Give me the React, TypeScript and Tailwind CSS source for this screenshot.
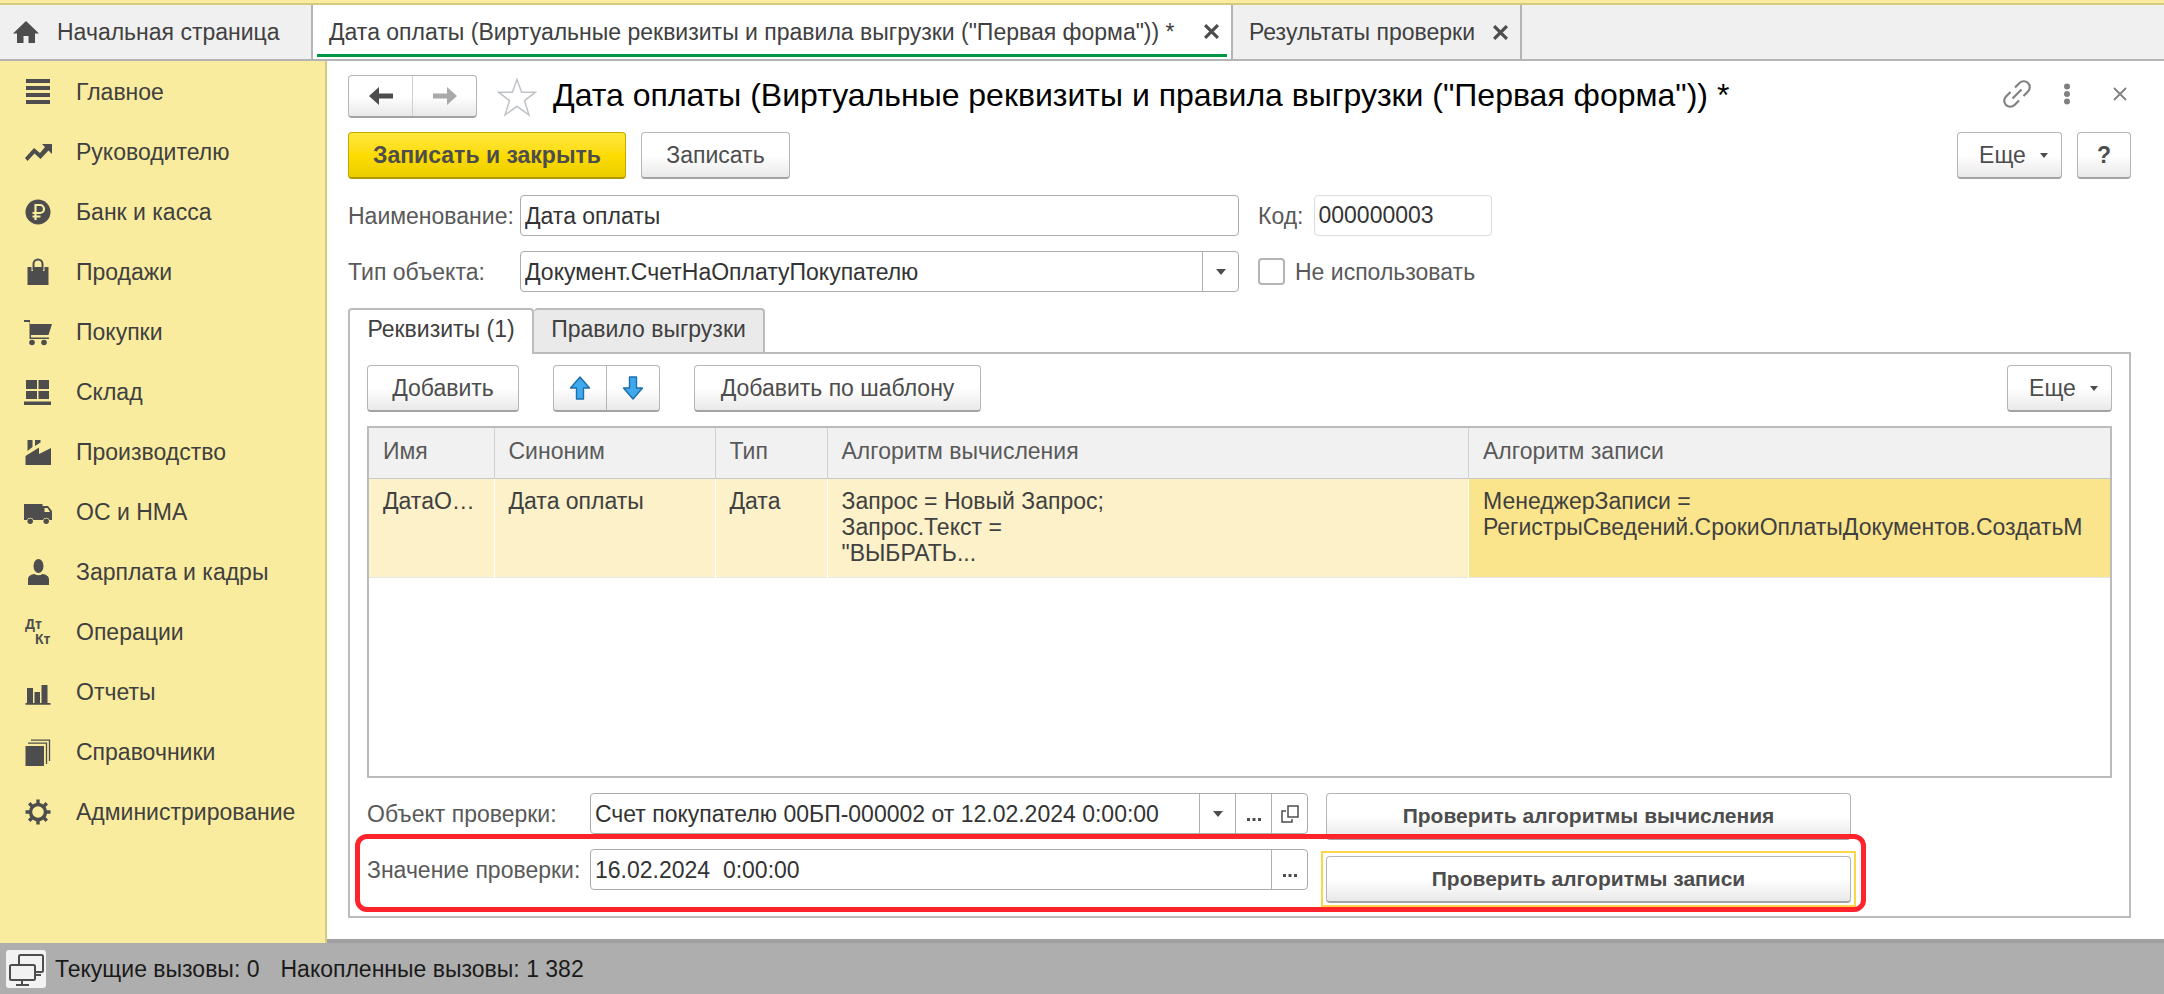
import React from "react";

type IconProps = { children: React.ReactNode };

function NavIcon({ children }: IconProps) {
  return (
    <svg viewBox="0 0 28 28" className="size-7 shrink-0 overflow-visible" fill="#4d4d4d" aria-hidden="true">
      {children}
    </svg>
  );
}

const sections: { label: string; icon: React.ReactNode }[] = [
  {
    label: "Главное",
    icon: <path d="M2 1h24v4H2zM2 8h24v4H2zM2 15h24v4H2zM2 22h24v4H2z" />,
  },
  {
    label: "Руководителю",
    icon: (
      <path d="M1 20 L10 10 L16 15 L21 9 L18 6 H28 V16 L24.500 12.500 L16.500 21 L10.500 15.500 L3.500 23 Z" />
    ),
  },
  {
    label: "Банк и касса",
    icon: (
      <>
        <circle cx="14" cy="14" r="12.500" />
        <path
          d="M11.500 22V7h4.500a4 4 0 0 1 0 8H8.500M8.500 18.500h8"
          fill="none"
          stroke="#f8ec9f"
          strokeWidth="2.200"
        />
      </>
    ),
  },
  {
    label: "Продажи",
    icon: (
      <>
        <path d="M3.500 9h4v4h1.500V9h10v4h1.500V9h4v18h-21z" />
        <path d="M9.500 12V6a4.500 4.500 0 0 1 9 0v6" fill="none" stroke="#4d4d4d" strokeWidth="2" />
      </>
    ),
  },
  {
    label: "Покупки",
    icon: (
      <>
        <path d="M0 2h6v4h22l-3.500 11H7v2.500h18V21H5.500V4H0z" />
        <circle cx="8" cy="24.500" r="2.800" />
        <circle cx="20" cy="24.500" r="2.800" />
      </>
    ),
  },
  {
    label: "Склад",
    icon: <path d="M2 2h11v9H2zM14.500 2H25v9H14.500zM2 13h11v8H2zM14.500 13H25v8H14.500zM0 23.500h27V27H0z" />,
  },
  {
    label: "Производство",
    icon: (
      <>
        <path d="M1.500 27V18L15 9.500V16L27 10v17z" />
        <path d="M3.500 2H8.500V9L3.500 13zM11 2h5.500v2.500L11 8z" />
      </>
    ),
  },
  {
    label: "ОС и НМА",
    icon: (
      <>
        <path d="M0 6h18.500v2H24l4 5v9h-2.500a3.500 3.500 0 0 0-6.500 0H9.500a3.500 3.500 0 0 0-6.500 0H0z" />
        <path d="M20.500 10h3l2.500 4h-5.500z" fill="#f8ec9f" />
        <circle cx="6.200" cy="23.200" r="2.700" />
        <circle cx="22.200" cy="23.200" r="2.700" />
      </>
    ),
  },
  {
    label: "Зарплата и кадры",
    icon: (
      <>
        <ellipse cx="14.500" cy="8" rx="5" ry="7" />
        <path d="M4 27v-5.500c0-3.500 3-5 6.500-5.500q4 2.500 8 0c3.500.5 6.500 2 6.500 5.500V27z" />
      </>
    ),
  },
  {
    label: "Операции",
    icon: (
      <g fontFamily="Liberation Sans, Arial, sans-serif" fontWeight="bold" fontSize="14">
        <text x="1" y="11">Дт</text>
        <text x="11" y="26">Кт</text>
      </g>
    ),
  },
  {
    label: "Отчеты",
    icon: <path d="M1.500 25h1.500V10h6v15h1.500V14h5.500v11h1.500V7h6v18h3v1.800h-25z" />,
  },
  {
    label: "Справочники",
    icon: (
      <>
        <path d="M1.500 8H20v20H1.500z" />
        <path d="M4 5.200h18.500V26M7 2.200h18.500V23" fill="none" stroke="#4d4d4d" strokeWidth="1.300" />
      </>
    ),
  },
  {
    label: "Администрирование",
    icon: (
      <>
        <circle cx="14" cy="14" r="7.500" fill="none" stroke="#4d4d4d" strokeWidth="3.400" />
        <path
          d="M14 1.500v5M14 21.500v5M1.500 14h5M21.500 14h5M5.200 5.200l3.500 3.500M19.300 19.300l3.500 3.500M22.800 5.200l-3.500 3.500M8.700 19.300l-3.500 3.500"
          stroke="#4d4d4d"
          strokeWidth="3.400"
        />
      </>
    ),
  },
];

const buttonBase =
  "flex items-center justify-center rounded border border-[#b5b5b5] border-b-2 border-b-[#a3a3a3] bg-linear-to-b from-white from-50% to-[#e9e9e9] text-[#4d4d4d]";

const fieldBox = "flex h-[41px] overflow-hidden rounded border border-[#ababab] bg-white";
const fieldInput = "min-w-0 flex-1 bg-transparent px-1 text-[#333] outline-none";
const fieldButton =
  "flex w-9 shrink-0 items-center justify-center border-l border-[#b0b0b0] text-[#4d4d4d]";

function Caret() {
  return (
    <svg viewBox="0 0 10 6" className="h-1.5 w-2.5" fill="#4d4d4d" aria-hidden="true">
      <path d="M0 0h10L5 6z" />
    </svg>
  );
}

function Dots() {
  return (
    <svg viewBox="0 0 16 18" className="h-[18px] w-4" fill="#4d4d4d" aria-hidden="true">
      <path d="M1 13h3v3H1zM6.500 13h3v3h-3zM12 13h3v3h-3z" />
    </svg>
  );
}

function Cross({ bold = false }: { bold?: boolean }) {
  return (
    <svg
      viewBox="0 0 14 14"
      className={bold ? "size-[15px]" : "size-3.5"}
      stroke={bold ? "#4d4d4d" : "#808080"}
      strokeWidth={bold ? 3 : 1.8}
      aria-hidden="true"
    >
      <path d="M1 1l12 12M13 1L1 13" />
    </svg>
  );
}

function MoreButton() {
  return (
    <button type="button" className={`${buttonBase} h-[47px] w-[105px] gap-3.5 pl-2`}>
      Еще
      <svg viewBox="0 0 8 5" className="h-[5px] w-2" fill="#4d4d4d" aria-hidden="true">
        <path d="M0 0h8L4 5z" />
      </svg>
    </button>
  );
}

function BlueArrow({ down = false }: { down?: boolean }) {
  return (
    <svg viewBox="0 0 22 24" className="h-6 w-[22px]" aria-hidden="true">
      <path
        d={down ? "M7.500 1h7v11H20.500L11 23 1.500 12H7.500z" : "M7.500 23h7V12H20.500L11 1 1.500 12H7.500z"}
        fill="#3fa9f0"
        stroke="#1c6fa8"
        strokeWidth="1.400"
        strokeLinejoin="round"
      />
    </svg>
  );
}

function TabBar() {
  return (
    <nav className="flex h-14 shrink-0 border-b-2 border-[#b4b4b4] bg-[#f0f0f0] text-[#404040]">
      <a href="#home" className="flex w-[313px] items-center gap-[17px] border-r-2 border-[#b4b4b4] pl-3">
        <svg viewBox="0 0 28 26" className="h-[26px] w-7" fill="#4d4d4d" aria-hidden="true">
          <path d="M14 2 1 14.500h4V24h6.500v-7h5v7H23v-9.500h4z" />
        </svg>
        Начальная страница
      </a>
      <div className="flex w-[920px] flex-col border-r-2 border-[#b4b4b4] bg-white px-1">
        <div className="flex h-[49px] items-center justify-between pt-1 pr-2 pl-3">
          <a href="#form">Дата оплаты (Виртуальные реквизиты и правила выгрузки ("Первая форма")) *</a>
          <button type="button" aria-label="Закрыть вкладку">
            <Cross bold />
          </button>
        </div>
        <div className="h-[3px] bg-[#009646]" />
      </div>
      <div className="flex w-[289px] items-center justify-between border-r-2 border-[#b4b4b4] pr-3 pl-4">
        <a href="#results">Результаты проверки</a>
        <button type="button" aria-label="Закрыть вкладку">
          <Cross bold />
        </button>
      </div>
    </nav>
  );
}

function Sidebar() {
  return (
    <aside className="w-[327px] shrink-0 border-r-2 border-[#d6c981] bg-[#faec9e] pt-px">
      <ul>
        {sections.map((section) => (
          <li key={section.label}>
            <a href="#section" className="flex h-15 items-center gap-6 pl-6 text-[#404040]">
              <NavIcon>{section.icon}</NavIcon>
              {section.label}
            </a>
          </li>
        ))}
      </ul>
    </aside>
  );
}

function TitleRow() {
  return (
    <div className="flex h-[43px] items-center">
      <div className={`${buttonBase} h-[43px] w-[129px]`}>
        <button type="button" aria-label="Назад" className="flex h-full flex-1 items-center justify-center border-r border-[#cfcfcf]">
          <svg viewBox="0 0 24 20" className="h-5 w-6" fill="#4d4d4d" aria-hidden="true">
            <path d="M0 10 10 1v6.500h14v5H10V19z" />
          </svg>
        </button>
        <button type="button" aria-label="Вперед" className="flex h-full flex-1 items-center justify-center">
          <svg viewBox="0 0 24 20" className="h-5 w-6" fill="#a9a9a9" aria-hidden="true">
            <path d="M24 10 14 1v6.500H0v5h14V19z" />
          </svg>
        </button>
      </div>
      <button type="button" aria-label="В избранное" className="ml-5">
        <svg viewBox="0 0 40 40" className="size-10" fill="none" stroke="#bfc3c7" strokeWidth="1.500" aria-hidden="true">
          <path d="M20 2.500 24.600 15.200H38.500L27.500 23.600 32 38 20 29.300 8 38 12.500 23.600 1.500 15.200H15.400z" />
        </svg>
      </button>
      <h1 className="ml-4 flex-1 pb-1 text-[32px] leading-10 whitespace-nowrap text-black">
        Дата оплаты (Виртуальные реквизиты и правила выгрузки ("Первая форма")) *
      </h1>
      <div className="flex items-center pr-1 pb-1.5">
        <button type="button" aria-label="Получить ссылку">
          <svg viewBox="0 0 28 28" className="size-7" fill="none" stroke="#808080" strokeWidth="2.200" aria-hidden="true">
            <path d="M9.500 18.500l9-9M12 7.500l4.500-4.500a5.900 5.900 0 0 1 8.500 8.500L20.500 16M16 20.500 11.500 25A5.900 5.900 0 0 1 3 16.500L7.500 12" />
          </svg>
        </button>
        <button type="button" aria-label="Меню" className="ml-8">
          <svg viewBox="0 0 8 22" className="h-[22px] w-2" fill="#808080" aria-hidden="true">
            <circle cx="4" cy="3.500" r="3" />
            <circle cx="4" cy="11" r="3" />
            <circle cx="4" cy="18.500" r="3" />
          </svg>
        </button>
        <button type="button" aria-label="Закрыть" className="ml-[42px]">
          <Cross />
        </button>
      </div>
    </div>
  );
}

function AttributesTable() {
  const head = "border-l border-[#d0d0d0] px-3.5 pb-1 text-left font-normal first:border-l-0";
  const cell = "border-l border-white bg-[#fcf1c9] px-3.5 py-[9px] align-top first:border-l-0";
  return (
    <div className="mt-[14px] min-h-[352px] flex-1 border-2 border-[#bcbcbc]">
      <table className="w-full table-fixed border-collapse leading-[26px]">
        <colgroup>
          <col className="w-[125px]" />
          <col className="w-[221px]" />
          <col className="w-[112px]" />
          <col />
          <col />
        </colgroup>
        <thead>
          <tr className="h-[50px] border-b border-[#c8c8c8] bg-[#f1f1f1] text-[#595959]">
            <th className={head}>Имя</th>
            <th className={head}>Синоним</th>
            <th className={head}>Тип</th>
            <th className={head}>Алгоритм вычисления</th>
            <th className={head}>Алгоритм записи</th>
          </tr>
        </thead>
        <tbody>
          <tr className="h-[99px] border-b border-[#e6e6e6] text-[#404040]">
            <td className={cell}>ДатаО…</td>
            <td className={cell}>Дата оплаты</td>
            <td className={cell}>Дата</td>
            <td className={cell}>
              Запрос = Новый Запрос;
              <br />
              Запрос.Текст =
              <br />
              "ВЫБРАТЬ...
            </td>
            <td className="overflow-hidden border-l border-white bg-[#fbe58c] px-3.5 py-[9px] align-top">
              <div className="overflow-hidden whitespace-nowrap">
                МенеджерЗаписи =
                <br />
                РегистрыСведений.СрокиОплатыДокументов.СоздатьМ
              </div>
            </td>
          </tr>
        </tbody>
      </table>
    </div>
  );
}

function CheckForm() {
  return (
    <div className="relative mt-[15px] flex gap-[18px] pb-[13px]">
      <div className="grid w-[941px] grid-cols-[223px_1fr] content-start items-center gap-y-[15px] text-[#595959]">
        <label htmlFor="check-object">Объект проверки:</label>
        <div className={fieldBox}>
          <input
            id="check-object"
            className={fieldInput}
            defaultValue="Счет покупателю 00БП-000002 от 12.02.2024 0:00:00"
          />
          <button type="button" aria-label="Выбрать из списка" className={fieldButton}>
            <Caret />
          </button>
          <button type="button" aria-label="Выбрать" className={fieldButton}>
            <Dots />
          </button>
          <button type="button" aria-label="Открыть" className={fieldButton}>
            <svg viewBox="0 0 18 18" className="size-[18px]" fill="none" stroke="#4d4d4d" strokeWidth="1.500" aria-hidden="true">
              <path d="M7 1h10v11H7zM5 6H1v11h10v-3" />
            </svg>
          </button>
        </div>
        <label htmlFor="check-value">Значение проверки:</label>
        <div className={fieldBox}>
          <input id="check-value" className={fieldInput} defaultValue={"16.02.2024\u00a0\u00a00:00:00"} />
          <button type="button" aria-label="Выбрать дату" className={fieldButton}>
            <Dots />
          </button>
        </div>
      </div>
      <div className="flex w-[525px] flex-col gap-4 font-bold">
        <button type="button" className={`${buttonBase} h-[47px] w-full text-[21px]`}>
          Проверить алгоритмы вычисления
        </button>
        <button
          type="button"
          className={`${buttonBase} relative h-[47px] w-full text-[21px] after:absolute after:-inset-1.5 after:border-2 after:border-[#fbd54a]`}
        >
          Проверить алгоритмы записи
        </button>
      </div>
      <div className="pointer-events-none absolute top-[41px] bottom-1 -left-3 w-[1511px] rounded-xl border-[5px] border-[#ff232b]" />
    </div>
  );
}

function FormPage() {
  return (
    <main className="flex min-w-0 flex-1 flex-col border-b-4 border-[#a0a0a0] bg-white pt-[14px] pr-[33px] pb-[21px] pl-[21px]">
      <TitleRow />
      <div className="mt-[14px] flex items-center">
        <button
          type="button"
          className="h-[47px] w-[278px] rounded border border-[#c4a800] border-b-2 border-b-[#b09800] bg-linear-to-b from-[#ffe73a] via-[#fddc00] to-[#ecce00] font-bold text-[#4d4d4d]"
        >
          Записать и закрыть
        </button>
        <button type="button" className={`${buttonBase} ml-[15px] h-[47px] w-[149px]`}>
          Записать
        </button>
        <div className="ml-auto flex gap-[15px]">
          <MoreButton />
          <button type="button" className={`${buttonBase} h-[47px] w-[54px] font-bold`}>
            ?
          </button>
        </div>
      </div>

      <div className="mt-4 grid grid-cols-[172px_719px_auto] items-center justify-start gap-y-[15px] text-[#595959]">
        <label htmlFor="name">Наименование:</label>
        <div className={fieldBox}>
          <input id="name" className={fieldInput} defaultValue="Дата оплаты" />
        </div>
        <div className="ml-[19px] flex items-center gap-2.5">
          <label htmlFor="code">Код:</label>
          <input
            id="code"
            className="h-[41px] w-[178px] rounded border border-[#dcdcdc] bg-white px-1 text-[#333] outline-none"
            defaultValue="000000003"
          />
        </div>
        <label htmlFor="object-type">Тип объекта:</label>
        <div className="grid h-[41px] grid-cols-[1fr_36px] items-stretch rounded border border-[#ababab]">
          <select
            id="object-type"
            className="col-span-2 col-start-1 row-start-1 appearance-none bg-transparent px-1 text-[#333] outline-none"
          >
            <option>Документ.СчетНаОплатуПокупателю</option>
          </select>
          <span className="pointer-events-none col-start-2 row-start-1 flex items-center justify-center border-l border-[#b0b0b0]">
            <Caret />
          </span>
        </div>
        <label className="ml-[19px] flex items-center gap-2.5">
          <input
            type="checkbox"
            className="size-[27px] appearance-none rounded-sm border-2 border-[#b4b4b4] bg-white"
          />
          Не использовать
        </label>
      </div>

      <div className="mt-4 flex h-[46px] items-end text-[#404040]" role="tablist">
        <button
          type="button"
          role="tab"
          aria-selected="true"
          className="z-10 h-[46px] w-[186px] rounded-t border-2 border-b-0 border-[#bcbcbc] bg-white pb-1.5"
        >
          Реквизиты (1)
        </button>
        <button
          type="button"
          role="tab"
          aria-selected="false"
          className="h-[46px] w-[231px] rounded-t border-t-2 border-r-2 border-[#bcbcbc] bg-[#eaeaea] pb-1.5"
        >
          Правило выгрузки
        </button>
      </div>

      <section className="-mt-0.5 flex flex-1 flex-col border-2 border-[#bcbcbc] px-[17px] pt-[11px]">
        <div className="flex">
          <button type="button" className={`${buttonBase} h-[47px] w-[152px]`}>
            Добавить
          </button>
          <div className={`${buttonBase} ml-[34px] h-[47px] w-[107px]`}>
            <button type="button" aria-label="Вверх" className="flex h-full flex-1 items-center justify-center border-r border-[#b5b5b5]">
              <BlueArrow />
            </button>
            <button type="button" aria-label="Вниз" className="flex h-full flex-1 items-center justify-center">
              <BlueArrow down />
            </button>
          </div>
          <button type="button" className={`${buttonBase} ml-[34px] h-[47px] w-[287px]`}>
            Добавить по шаблону
          </button>
          <div className="ml-auto">
            <MoreButton />
          </div>
        </div>
        <AttributesTable />
        <CheckForm />
      </section>
    </main>
  );
}

export default function App() {
  return (
    <div className="flex min-h-screen flex-col bg-[#aeaeae] font-['Liberation_Sans',Arial,sans-serif] text-[23px] leading-7">
      <div className="h-[5px] shrink-0 border-b-2 border-[#d6c981] bg-[#faec9e]" />
      <TabBar />
      <div className="flex flex-1">
        <Sidebar />
        <FormPage />
      </div>
      <footer className="flex h-[51px] shrink-0 items-center gap-[9px] pl-1.5 text-[#1a1a1a]">
        <svg viewBox="0 0 40 38" className="h-[38px] w-10" fill="none" stroke="#4d4d4d" strokeWidth="2" aria-hidden="true">
          <rect x="0" y="0" width="40" height="38" rx="3" fill="#f2f2f2" stroke="none" />
          <rect x="13" y="5" width="24" height="17" rx="1.500" />
          <rect x="4" y="15" width="25" height="15" rx="1.500" fill="#f2f2f2" />
          <path d="M16 30v4M10 35h13M29 25h6" />
        </svg>
        <span>Текущие вызовы: 0</span>
        <span className="ml-3">Накопленные вызовы: 1 382</span>
      </footer>
    </div>
  );
}
